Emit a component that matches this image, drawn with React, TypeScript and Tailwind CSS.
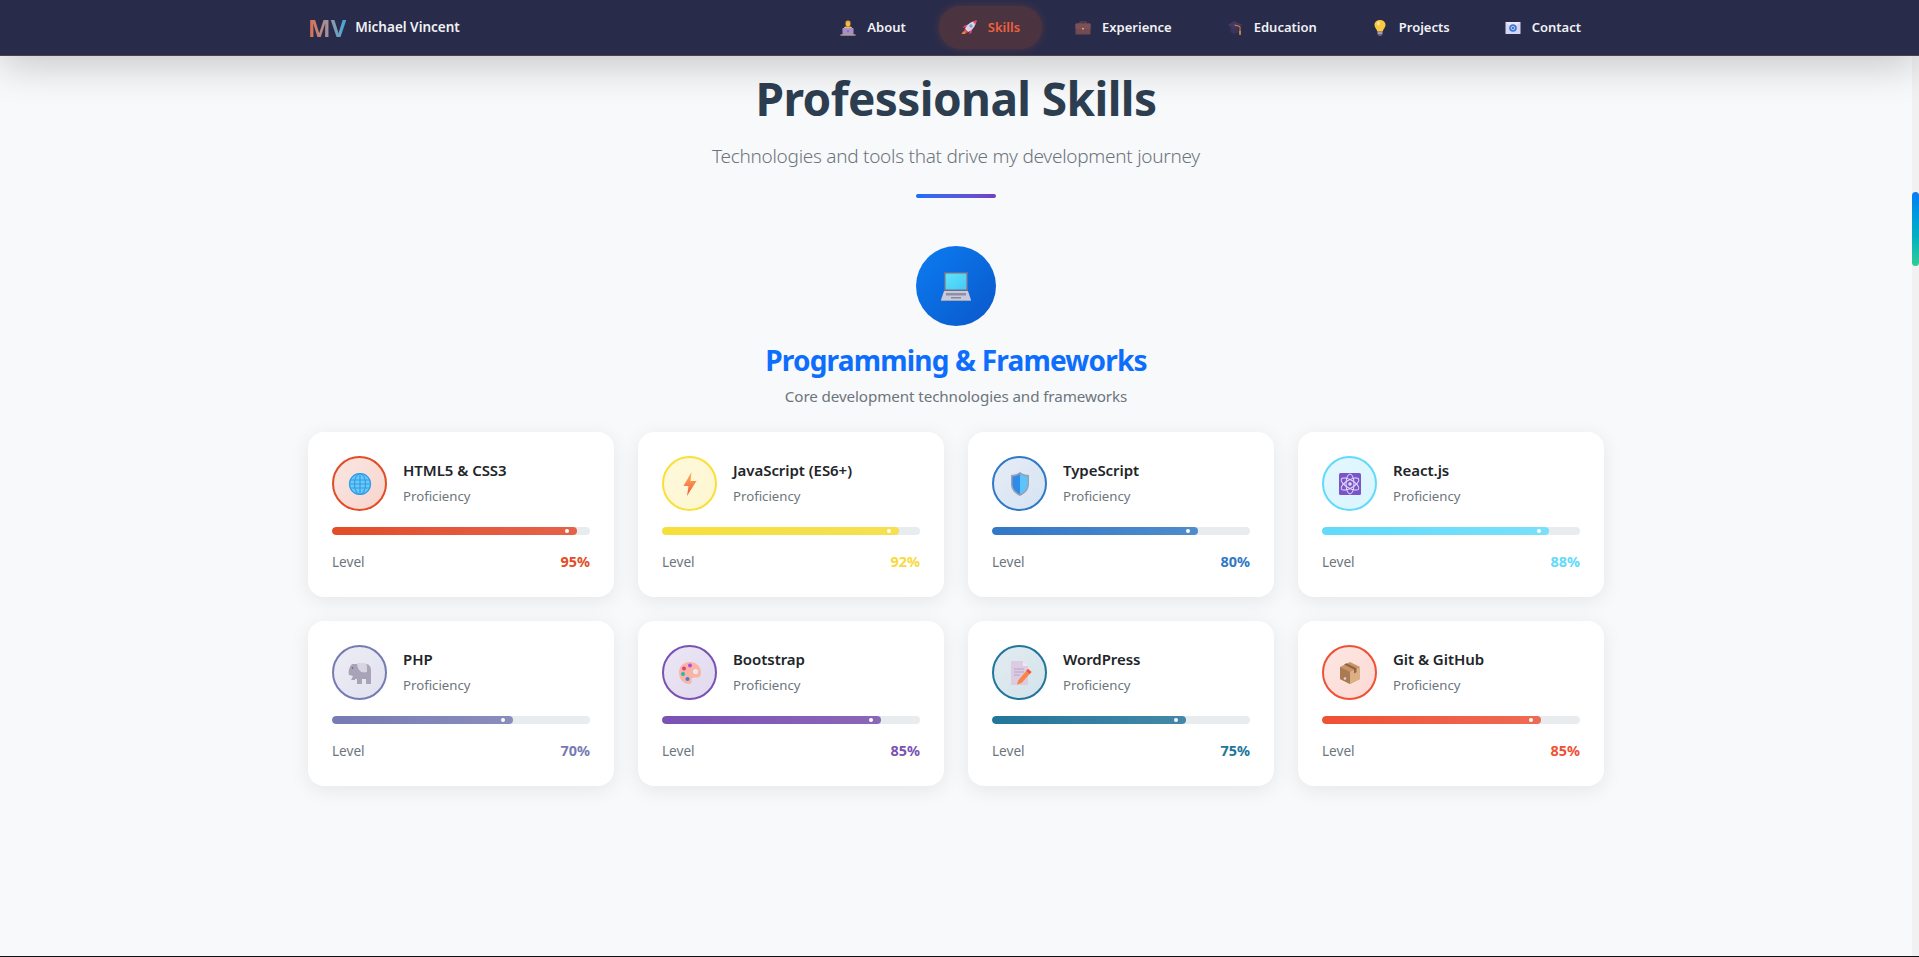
import type { ReactNode } from "react";

const FONT = "font-['Noto_Sans','Open_Sans',sans-serif]";

function Technologist() {
  return (
    <svg viewBox="0 0 16 16" className="w-4 h-4">
      <rect x="5.5" y="0.5" width="5" height="6" rx="2" fill="#e8a33a" />
      <rect x="6.5" y="2.5" width="3" height="3.5" rx="1" fill="#f3c14e" />
      <rect x="4" y="6.5" width="8" height="3" rx="1.5" fill="#eec05a" />
      <rect x="2.5" y="8" width="11" height="6.5" rx="0.5" fill="#a88fc9" />
      <rect x="7.2" y="10.5" width="1.6" height="1.6" fill="#7d64a6" />
      <rect x="0.5" y="14.5" width="15" height="1" fill="#e9d9b0" />
    </svg>
  );
}

function Rocket() {
  return (
    <svg viewBox="0 0 16 16" className="w-4 h-4">
      <path d="M5 7 1.5 8 3.500 5.500 7 4.500z" fill="#ee3f7c" />
      <path d="M9 11 8 14.500 10.500 12.500 11.500 9z" fill="#ee3f7c" />
      <path d="M4 9C5.500 5 9.500 1.500 15.500.5 14.500 6.500 11 10.500 7 12z" fill="#ddd6e2" />
      <path d="M11.500 1.500c1.300-.5 2.600-.8 4-1-.2 1.400-.5 2.700-1 4z" fill="#f0486a" />
      <circle cx="10" cy="6" r="1.700" fill="#6fa4e8" />
      <path d="M4 9 7 12 5 13 3 11z" fill="#f0486a" />
      <path d="M2 11.500h2.500V14H.5z" fill="#f4823c" />
    </svg>
  );
}

function Briefcase() {
  return (
    <svg viewBox="0 0 16 16" className="w-4 h-4">
      <path d="M5 4V2h6v2" fill="none" stroke="#6a4750" strokeWidth="1.2" />
      <rect x="0.5" y="3.5" width="15" height="11" rx="1" fill="#714a52" />
      <rect x="0.5" y="3.5" width="15" height="5.5" rx="1" fill="#7d5058" />
      <rect x="7" y="8" width="2" height="1.5" fill="#e0a070" />
    </svg>
  );
}

function GradCap() {
  return (
    <svg viewBox="0 0 16 16" className="w-4 h-4">
      <path d="M3.5 7v5c2 2 6 2 8 0V7z" fill="#3b3358" />
      <path d="M7.5 1 15.5 5 7.5 9 .5 5z" fill="#43385f" />
      <path d="M7.5 5 13 6.5V13" fill="none" stroke="#d68a45" strokeWidth="1" />
      <rect x="12.3" y="11" width="1.4" height="4" fill="#e49a50" />
    </svg>
  );
}

function Bulb() {
  return (
    <svg viewBox="0 0 16 16" className="w-4 h-4">
      <path d="M8 0C4.600 0 2.500 2.300 2.500 5c0 2.600 2.300 3.800 2.800 6.500h5.400c.5-2.700 2.800-3.900 2.800-6.500 0-2.700-2.100-5-5.500-5z" fill="#fbc93f" />
      <ellipse cx="6.500" cy="3.500" rx="1.500" ry="2" fill="#ffe89a" />
      <rect x="5.500" y="11.500" width="5" height="3" rx="0.5" fill="#a49ab0" />
      <rect x="6.500" y="14.500" width="3" height="1.500" rx="0.5" fill="#6f6680" />
    </svg>
  );
}

function Mail() {
  return (
    <svg viewBox="0 0 16 16" className="w-4 h-4">
      <rect x="0.5" y="2" width="15" height="12" rx="0.5" fill="#d8d5f2" />
      <path d="M.5 2 8 8l7.500-6z" fill="#ece9fb" />
      <circle cx="8" cy="8" r="3.800" fill="#3f78d8" />
      <circle cx="8" cy="8" r="1.700" fill="none" stroke="#b9d3f7" strokeWidth="0.9" />
    </svg>
  );
}

function Laptop() {
  return (
    <svg viewBox="0 0 32 32" className="w-8 h-8">
      <defs>
        <linearGradient id="scr" x1="0" y1="0" x2="1" y2="1">
          <stop offset="0" stopColor="#5de4fb" />
          <stop offset="1" stopColor="#46c8f5" />
        </linearGradient>
      </defs>
      <rect x="4" y="2" width="24" height="19" fill="#6b6d92" />
      <rect x="5.5" y="3.500" width="21" height="16" fill="url(#scr)" />
      <path d="M4 21h24l3 9H1z" fill="#c9c9dc" />
      <rect x="6" y="23" width="20" height="2.500" fill="#8f90a8" />
      <rect x="11" y="27" width="10" height="1.500" fill="#85869e" />
      <rect x="1" y="30" width="30" height="1" fill="#a4a5bb" />
    </svg>
  );
}

function Globe() {
  return (
    <svg viewBox="0 0 24 24" className="w-6 h-6" fill="none">
      <circle cx="12" cy="12" r="11" fill="#6dc8f7" />
      <g stroke="#2f9ee8" strokeWidth="1.2">
        <circle cx="12" cy="12" r="10.500" />
        <ellipse cx="12" cy="12" rx="5.500" ry="10.500" />
        <path d="M12 1.500v21M2 8h20M2 16h20M1.500 12h21" />
      </g>
    </svg>
  );
}

function Bolt() {
  return (
    <svg viewBox="0 0 24 24" className="w-6 h-6">
      <defs>
        <linearGradient id="bolt" x1="0" y1="0" x2="0" y2="1">
          <stop offset="0" stopColor="#fbb25a" />
          <stop offset="1" stopColor="#f25c3f" />
        </linearGradient>
      </defs>
      <path d="M13.500 0 5.500 14h5L9 24l9.500-15h-6z" fill="url(#bolt)" />
    </svg>
  );
}

function Shield() {
  return (
    <svg viewBox="0 0 24 24" className="w-6 h-6">
      <path d="M12 0C9.500 2 6.500 3 3 3v9c0 5.500 3.500 9.500 9 12 5.500-2.500 9-6.500 9-12V3c-3.500 0-6.500-1-9-3z" fill="#9a9fb5" />
      <path d="M12 2C9.800 3.600 7.200 4.500 4.500 4.600V12c0 4.500 3 8 7.500 10.200z" fill="#2f8be8" />
      <path d="M12 2c2.200 1.600 4.800 2.500 7.500 2.600V12c0 4.500-3 8-7.500 10.200z" fill="#5cc3fb" />
    </svg>
  );
}

function Atom() {
  return (
    <svg viewBox="0 0 24 24" className="w-6 h-6" fill="none">
      <rect x="1" y="1" width="22" height="22" rx="1.500" fill="#7a55c9" />
      <g stroke="#e6dcf8" strokeWidth="1">
        <ellipse cx="12" cy="12" rx="4" ry="10" />
        <ellipse cx="12" cy="12" rx="4" ry="10" transform="rotate(60 12 12)" />
        <ellipse cx="12" cy="12" rx="4" ry="10" transform="rotate(120 12 12)" />
      </g>
      <circle cx="12" cy="12" r="1.800" fill="#e6dcf8" />
    </svg>
  );
}

function Elephant() {
  return (
    <svg viewBox="0 0 24 24" className="w-6 h-6">
      <path d="M5 3h13c3 0 5 3 5 6v14h-5v-5h-4v5H9v-5H7v1H3l2-4-4-1c-1-3 0-6 1-8 .5-1.500 1.500-3 3-3z" fill="#a9a3b8" />
      <path d="M9 2h7c2 0 3 2 3 4v5c-3 1-6 0-7-1-2-2-3-5-3-8z" fill="#d9d4e2" />
      <circle cx="4.500" cy="7" r="0.8" fill="#5b5668" />
    </svg>
  );
}

function Palette() {
  return (
    <svg viewBox="0 0 24 24" className="w-6 h-6">
      <path d="M12 1C5.500 1 1 5.500 1 11.500 1 18 5.500 23 11 23c2.500 0 3-1.500 2.500-3-.7-2 .5-3.500 3-3.500h2.500c3 0 4-2 4-5C23 5.500 18 1 12 1z" fill="#fbb3a4" />
      <circle cx="17.500" cy="10.500" r="2.600" fill="#efe4ef" />
      <circle cx="6" cy="7.500" r="2" fill="#e23b8e" />
      <circle cx="12" cy="4.500" r="2" fill="#a94fe0" />
      <circle cx="5" cy="13" r="2" fill="#22b8b0" />
      <circle cx="9.500" cy="18" r="2" fill="#3c82e0" />
    </svg>
  );
}

function Memo() {
  return (
    <svg viewBox="0 0 24 24" className="w-6 h-6">
      <path d="M3 0h12l5 5v19H3z" fill="#dbcbe3" />
      <path d="M15 0l5 5h-5z" fill="#f0e7f3" />
      <path d="M6 8h10M6 11h10M6 14h6" stroke="#b7a5c4" strokeWidth="1" />
      <path d="M20 8l3.500 3-10 11-4.500 1.500L10.500 19z" fill="#f98545" />
      <path d="M20 8l3.500 3-1.800 2-3.500-3z" fill="#ef5350" />
    </svg>
  );
}

function Package() {
  return (
    <svg viewBox="0 0 24 24" className="w-6 h-6">
      <path d="M12 1 22 6v12l-10 5-10-5V6z" fill="#c99466" />
      <path d="M12 11v12l10-5V6z" fill="#dcb084" />
      <path d="M2 6l10 5v12L2 18z" fill="#a97a54" />
      <path d="M6 3.500 16 8.500v4l2.500-1.300v-4L8.500 2.300z" fill="#8f6546" />
      <circle cx="7" cy="17.500" r="1.300" fill="#e5d6c6" />
    </svg>
  );
}

type Skill = {
  name: string;
  pct: number;
  fill: string;
  iconBg: string;
  border: string;
  text: string;
  icon: ReactNode;
};

const SKILLS: Skill[] = [
  { name: "HTML5 & CSS3", pct: 95, fill: "bg-gradient-to-r from-[#e34c26] to-[#e4624a]", iconBg: "bg-gradient-to-br from-[#fae6e2] to-[#f7d5cd]", border: "border-[#e34c26]", text: "text-[#e34c26]", icon: <Globe /> },
  { name: "JavaScript (ES6+)", pct: 92, fill: "bg-gradient-to-r from-[#f7df3a] to-[#f5e050]", iconBg: "bg-gradient-to-br from-[#fef9dd] to-[#fdf6cf]", border: "border-[#f9df3b]", text: "text-[#f9d93b]", icon: <Bolt /> },
  { name: "TypeScript", pct: 80, fill: "bg-gradient-to-r from-[#3178c6] to-[#4f8ccb]", iconBg: "bg-gradient-to-br from-[#e6edf6] to-[#d5e3f3]", border: "border-[#3178c6]", text: "text-[#3178c6]", icon: <Shield /> },
  { name: "React.js", pct: 88, fill: "bg-gradient-to-r from-[#61dafb] to-[#78e0fb]", iconBg: "bg-gradient-to-br from-[#e4f7fe] to-[#daf5fe]", border: "border-[#61dafb]", text: "text-[#61dafb]", icon: <Atom /> },
  { name: "PHP", pct: 70, fill: "bg-gradient-to-r from-[#777bb4] to-[#8a8dbc]", iconBg: "bg-gradient-to-br from-[#ecedf5] to-[#e1e2ef]", border: "border-[#777bb4]", text: "text-[#777bb4]", icon: <Elephant /> },
  { name: "Bootstrap", pct: 85, fill: "bg-gradient-to-r from-[#7952b3] to-[#8b67b9]", iconBg: "bg-gradient-to-br from-[#ece6f5] to-[#e1d9ee]", border: "border-[#7952b3]", text: "text-[#7952b3]", icon: <Palette /> },
  { name: "WordPress", pct: 75, fill: "bg-gradient-to-r from-[#21759b] to-[#4488a8]", iconBg: "bg-gradient-to-br from-[#e2ecf1] to-[#d3e3ea]", border: "border-[#21759b]", text: "text-[#21759b]", icon: <Memo /> },
  { name: "Git & GitHub", pct: 85, fill: "bg-gradient-to-r from-[#f05033] to-[#ee6a55]", iconBg: "bg-gradient-to-br from-[#fde7e3] to-[#fcd9d3]", border: "border-[#f05033]", text: "text-[#f05033]", icon: <Package /> },
];

const NAV = [
  { label: "About", icon: <Technologist /> },
  { label: "Skills", icon: <Rocket />, active: true },
  { label: "Experience", icon: <Briefcase /> },
  { label: "Education", icon: <GradCap /> },
  { label: "Projects", icon: <Bulb /> },
  { label: "Contact", icon: <Mail /> },
];

function SkillCard({ skill }: { skill: Skill }) {
  return (
    <div className="bg-white rounded-2xl p-6 h-[165px] shadow-[0_4px_20px_rgba(0,0,0,0.08)]">
      <div className="flex items-center gap-4 h-[55px]">
        <div className={`w-[55px] h-[55px] rounded-full border-2 flex items-center justify-center shrink-0 ${skill.iconBg} ${skill.border}`}>
          {skill.icon}
        </div>
        <div className="flex flex-col gap-[6px] pb-[2px]">
          <h4 className="text-[15px] leading-[20px] font-semibold tracking-[-0.05px] text-[#212529]">{skill.name}</h4>
          <p className="text-[13.2px] leading-[20px] text-[#6c757d]">Proficiency</p>
        </div>
      </div>
      <div className="mt-4 h-2 rounded-full bg-[#e9ecef] overflow-hidden">
        <div className={`relative h-full rounded-full ${skill.fill}`} style={{ width: `${skill.pct}%` }}>
          <span className="absolute right-2 top-[2px] w-1 h-1 rounded-full bg-white" />
        </div>
      </div>
      <div className="mt-[17px] flex justify-between items-center text-[13.6px] leading-[20px]">
        <span className="text-[#6c757d]">Level</span>
        <span className={`font-bold text-[14.4px] ${skill.text}`}>{skill.pct}%</span>
      </div>
    </div>
  );
}

export default function App() {
  return (
    <div className={`relative h-[957px] overflow-hidden bg-[#f8f9fa] ${FONT}`}>
      <nav className="relative z-10 h-[56px] bg-[#282c4a] border-b border-[#4f3f4f] shadow-[0_10px_40px_rgba(0,0,0,0.2)]">
        <div className="mx-auto w-[1296px] h-full flex items-center justify-between relative left-[-3.5px]">
          <div className="flex items-center gap-[9px]">
            <span className="text-[24px] font-bold leading-none bg-gradient-to-r from-[#e0694a] to-[#2fa8dc] bg-clip-text text-transparent">MV</span>
            <span className="text-[13.5px] font-semibold text-[#f1f1f5]">Michael Vincent</span>
          </div>
          <ul className="flex items-center gap-[11px] mr-[1px]">
            {NAV.map((item) => (
              <li
                key={item.label}
                className={`flex items-center gap-[11px] h-[43px] px-[22px] rounded-full text-[13px] font-semibold ${
                  item.active
                    ? "text-[#f0603f] bg-[#4b3440] shadow-[0_0_8px_rgba(240,90,60,0.22)]"
                    : "text-[#f1f1f5]"
                }`}
              >
                {item.icon}
                <span>{item.label}</span>
              </li>
            ))}
          </ul>
        </div>
      </nav>

      <main className="mx-auto w-[1296px] relative left-[-3.5px]">
        <header className="flex flex-col items-center">
          <h1 className="mt-[10px] text-[46px] leading-[64px] font-bold tracking-[-0.6px] text-[#2c3e50]">Professional Skills</h1>
          <p className="mt-[11px] text-[19px] leading-[30px] font-light tracking-[-0.28px] text-[#6c757d]">
            Technologies and tools that drive my development journey
          </p>
          <div className="mt-[23px] w-20 h-1 rounded-full bg-gradient-to-r from-[#0d6efd] to-[#6f42c1]" />
        </header>

        <section className="mt-12 flex flex-col items-center">
          <div className="w-20 h-20 rounded-full bg-gradient-to-br from-[#0d7cf2] to-[#0a58ca] flex items-center justify-center">
            <Laptop />
          </div>
          <h2 className="mt-4 text-[28px] leading-[36px] font-bold tracking-[-0.8px] text-[#0d6efd]">Programming &amp; Frameworks</h2>
          <p className="mt-[6px] text-[15.2px] leading-[24px] tracking-[-0.1px] text-[#6c757d]">Core development technologies and frameworks</p>
        </section>

        <div className="mt-[24px] grid grid-cols-4 gap-6 w-[1296px]">
          {SKILLS.map((s) => (
            <SkillCard key={s.name} skill={s} />
          ))}
        </div>
      </main>

      {/* scrollbar */}
      <div className="absolute right-0 top-0 bottom-[1px] w-[7px] bg-[#f1f1f1]">
        <div className="mt-[192px] h-[74px] rounded-full bg-gradient-to-b from-[#0d7cf8] to-[#2ecc94]" />
      </div>
      <div className="absolute left-0 right-0 bottom-0 h-[1px] bg-[#111]" />
    </div>
  );
}
